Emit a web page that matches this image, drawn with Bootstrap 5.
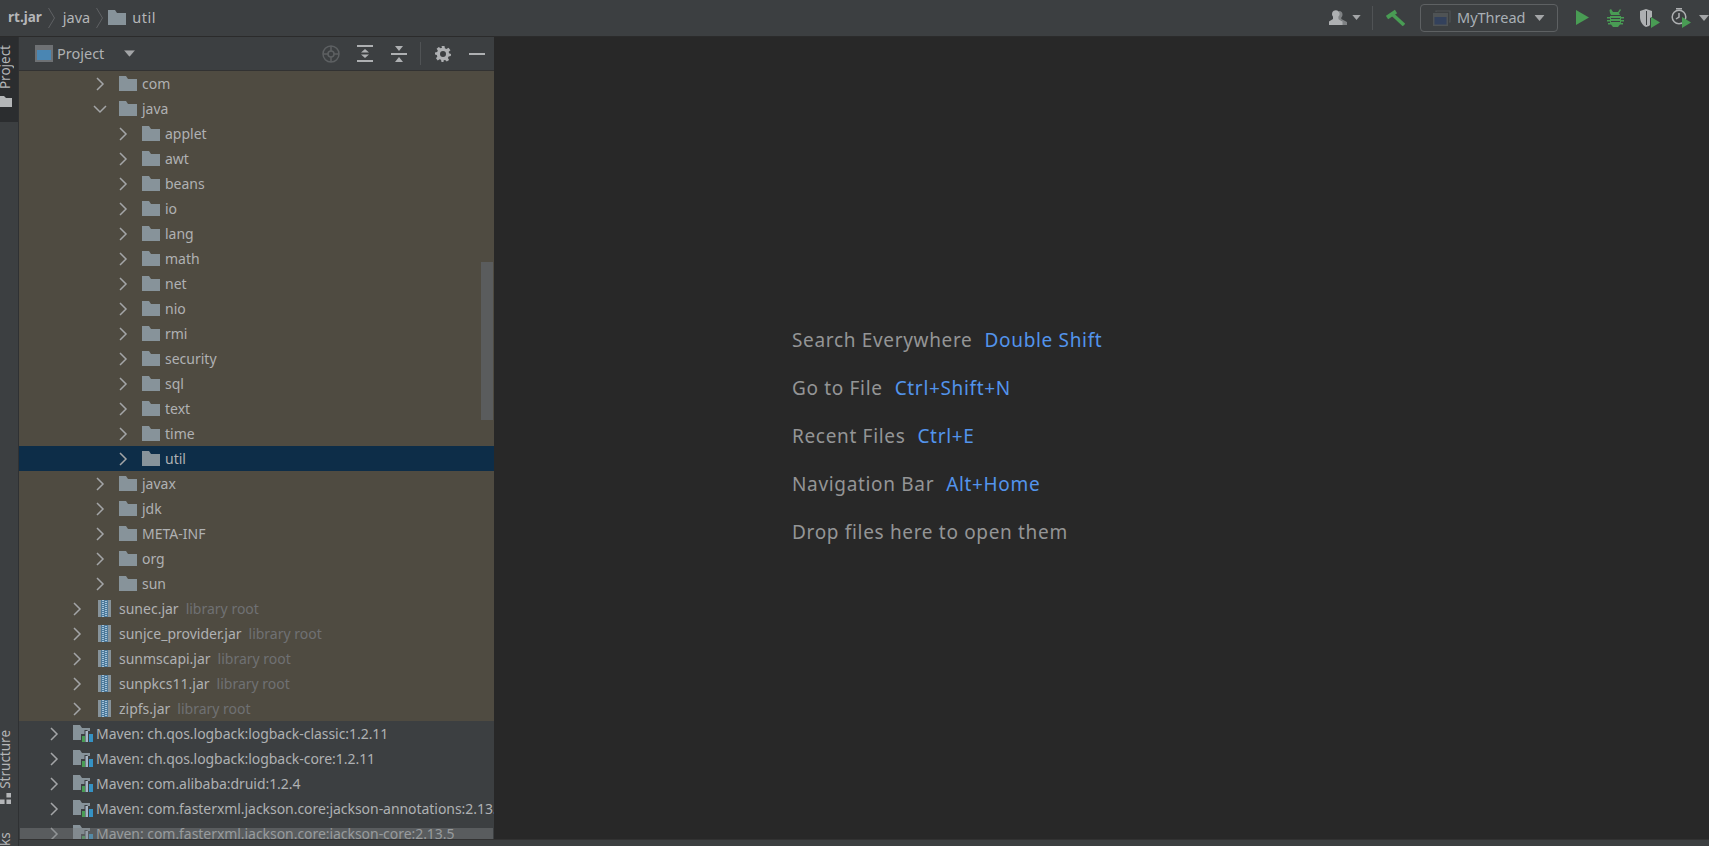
<!DOCTYPE html>
<html lang="en">
<head>
  <meta charset="UTF-8">
  <meta name="viewport" content="width=device-width, initial-scale=1.0">
  <title>rt.jar - util</title>
  <link href="https://cdn.jsdelivr.net/npm/bootstrap@5.3.0/dist/css/bootstrap.min.css" rel="stylesheet">
  <style>
    html, body { height: 100%; }
    body { background: #282828; color: #afb1b3; font-family: "Noto Sans", "Open Sans", sans-serif; font-size: 14px; overflow: hidden; }
    svg { display: block; flex: none; }
    .ide-top { height: 37px; background: #3c3f41; border-bottom: 1px solid #2b2b2b; flex: none; padding: 0 0 1px 8px; font-size: 14.5px; }
    .crumb { color: #b4b6b8; }
    .crumb-main { font-size: 13.5px; }
    .crumb-sep { margin: 0 8px 0 6px; }
    .crumb-last { margin-left: 6px; letter-spacing: .5px; }
    .run-config { width: 138px; height: 28px; border: 1px solid #5e6163; border-radius: 4px; padding-left: 12px; margin: 0 18px 0 15px; color: #a9b0b6; }
    .run-name { margin-left: 6px; }
    .top-sep { width: 1px; height: 24px; background: #505355; margin: 0 13px 0 11px; }
    .ide-body { min-height: 0; }
    .tool-strip { width: 19px; background: #3c3f41; border-right: 1px solid #2f3133; flex: none; font-size: 13.5px; color: #b4b6b8; overflow: hidden; }
    .strip-tab { writing-mode: vertical-rl; transform: rotate(180deg); line-height: 11px; white-space: nowrap; }
    .strip-active { background: #2b2d2f; height: 85px; padding-top: 8px; }
    .strip-end { height: 11px; }
    .strip-icon { margin-top: 7px; }
    .project-panel { width: 475px; flex: none; background: #3c3f41; position: relative; overflow: hidden; }
    .panel-head { height: 34px; border-bottom: 1px solid #323232; flex: none; padding-left: 16px; font-size: 14.5px; }
    .panel-sep { width: 1px; height: 23px; background: #505355; }
    .tree-row { height: 25px; white-space: nowrap; flex: none; }
    .tree-row.tinted { background: #4f4b41; }
    .tree-row.active { background: #0d2d48; }
    .lv0 { padding-left: 27px; letter-spacing: -.05px; }
    .lv1 { padding-left: 50px; }
    .lv2 { padding-left: 73px; }
    .lv3 { padding-left: 96px; }
    .arrow { width: 16px; margin-right: 11px; }
    .lv1 .arrow { margin-right: 13px; }
    .name { margin-left: 5px; }
    .lv1 .name { margin-left: 8px; }
    .lv0 .name { margin-left: 3px; }
    .hint { color: #6f7173; margin-left: 7px; }
    .v-thumb { position: absolute; right: 1px; top: 225px; width: 12px; height: 158px; background: #5a5c5d; }
    .h-thumb { position: absolute; left: 1px; right: 1px; bottom: 0; height: 11px; background: rgba(125,128,130,.45); }
    .ide-empty { background: #282828; font-size: 19px; letter-spacing: .67px; padding: 0 0 3px 298px; color: #949596; }
    .ide-empty > div { height: 48px; display: flex; align-items: center; }
    .keys { color: #5394ec; margin-left: 12px; }
    .ide-bottom { height: 7px; background: #3c3f41; flex: none; border-top: 1px solid #323232; }
  </style>
</head>
<body class="d-flex flex-column">
  <svg width="0" height="0" class="position-absolute">
    <symbol id="folder" viewBox="0 0 18 15"><path fill="#87939a" d="M0 0h7l2 3h9v12H0z"/></symbol>
    <symbol id="chev-r" viewBox="0 0 16 16"><path fill="none" stroke="#a3a5a7" stroke-width="1.5" d="M5 2l6 6-6 6"/></symbol>
    <symbol id="chev-d" viewBox="0 0 16 16"><path fill="none" stroke="#a3a5a7" stroke-width="1.5" d="M2 5l6 6 6-6"/></symbol>
    <symbol id="jar" viewBox="0 0 13 17"><path fill="#87939a" d="M0 0h13v17H0z"/><path fill="#4d7a9b" d="M3 0h7v17H3z"/><path fill="none" stroke="#a6c4da" stroke-width="2" stroke-dasharray="1 1" d="M5 0v17"/><path fill="none" stroke="#a6c4da" stroke-width="2" stroke-dasharray="1 1" stroke-dashoffset="1" d="M8 0v17"/></symbol>
    <symbol id="maven" viewBox="0 0 20 17"><path fill="#87939a" d="M0 0h7l2 3h8v3h-3v9H0z"/><path fill="#3c3f41" d="M8 9h11v8H8zM11.500 5h3v4h-3z"/><path fill="#499c54" d="M9 11h3v6H9z"/><path fill="#a9b7c6" d="M12.500 6h2.500v11h-2.500z"/><path fill="#3592c4" d="M16 9h4v8h-4z"/></symbol>
    <symbol id="caret" viewBox="0 0 10 6"><path fill="#a3a5a7" d="M0 0h10L5 6z"/></symbol>
  </svg>

  <div class="ide-top d-flex align-items-center">
    <b class="crumb crumb-main">rt.jar</b>
    <svg class="crumb-sep" width="7" height="20" viewBox="0 0 7 20"><path fill="none" stroke="#5f6264" d="M.5 0l6 10-6 10"/></svg>
    <span class="crumb">java</span>
    <svg class="crumb-sep" style="margin-right:5px" width="7" height="20" viewBox="0 0 7 20"><path fill="none" stroke="#5f6264" d="M.5 0l6 10-6 10"/></svg>
    <svg width="18" height="15"><use href="#folder"/></svg>
    <span class="crumb crumb-last">util</span>

    <div class="ms-auto d-flex align-items-center">
      <svg width="18" height="15" viewBox="0 0 18 15"><path fill="#7f8284" d="M10 1a3.500 3.500 0 0 1 3.500 3.500c0 1.300-.5 2.200-1.200 3V9l5.700 3v3h-5v-4L9 9z"/><path fill="#aeb0b2" d="M3 4a3.800 3.800 0 1 1 6.500 2.700V9l4 2.500V15H0v-3.500L4 9V6.700A3.800 3.800 0 0 1 3 4z"/></svg>
      <svg style="margin-left:5px" width="9" height="5"><use href="#caret"/></svg>
      <div class="top-sep"></div>
      <svg width="19" height="17" viewBox="0 0 19 17"><path fill="none" stroke="#499c54" stroke-width="4" d="M1 8.500L10 2.500"/><path fill="none" stroke="#499c54" stroke-width="3.500" d="M6 5l12 11"/></svg>
      <div class="run-config d-flex align-items-center">
        <svg width="18" height="16" viewBox="0 0 18 16"><path fill="none" stroke="#4f5355" stroke-width="1.2" d="M3 2V1h14v11h-1"/><path fill="#4f5355" d="M0 3h15v13H0z"/><path fill="#33415c" d="M1.500 7h12v7.500h-12z"/></svg>
        <span class="run-name">MyThread</span>
        <svg class="ms-auto" style="margin-right:12px" width="11" height="6" viewBox="0 0 10 6"><use href="#caret"/></svg>
      </div>
      <svg width="13" height="15" viewBox="0 0 13 15"><path fill="#499c54" d="M0 0l13 7.500L0 15z"/></svg>
      <svg style="margin:0 16px 0 18px" width="17" height="18" viewBox="0 0 17 18"><path fill="#499c54" d="M4 0l2 3h5l2-3 1 1-2 3 1 2H4L3 4 2.500 1zM3 7h11v1h3v1.500h-3V11h3v1.500h-3V14h2v1.500h-3L11 18H6l-2-2.500H1V14h2v-1.500H0V11h3V9.500H0V8h3z"/><path fill="#3c3f41" d="M4 9h9v1H4zm0 3h9v1H4z"/></svg>
      <svg width="20" height="20" viewBox="0 0 20 20"><path fill="#aeb0b2" d="M0 3l6-2 6 2v6l-2 1v7l-1 1-3 1C2 17 0 13 0 9z"/><path fill="#3c3f41" d="M6 3h1v14H6z"/><path fill="#499c54" d="M11 9l9 5.500-9 5.500z"/></svg>
      <svg style="margin-left:11px" width="20" height="20" viewBox="0 0 20 20"><circle cx="8" cy="9" r="6.800" fill="none" stroke="#aeb0b2" stroke-width="1.500"/><path fill="#aeb0b2" d="M5 0h6v1.500H5z"/><path fill="none" stroke="#aeb0b2" stroke-width="1.500" d="M8 5v4l-3 2"/><path fill="#499c54" d="M11 9l9 5.500-9 5.500z"/></svg>
      <svg class="ms-2" width="10" height="6"><use href="#caret"/></svg>
    </div>
  </div>

  <div class="ide-body d-flex flex-grow-1">
    <div class="tool-strip d-flex flex-column">
      <div class="strip-active d-flex flex-column align-items-start">
        <div class="strip-tab">Project</div>
        <svg class="strip-icon" width="12" height="11" viewBox="0 0 12 11"><path fill="#b4b6b8" d="M0 0h4l2 2h6v9H0z"/></svg>
      </div>
      <div class="mt-auto d-flex flex-column align-items-start">
        <div class="strip-tab">Structure</div>
        <svg class="mt-1" width="11" height="11" viewBox="0 0 12 12"><path fill="#b4b6b8" d="M7 0h5v5H7zM0 7h5v5H0zM7 7h5v5H7z"/></svg>
      </div>
      <div class="strip-end strip-tab" style="margin-top:31px">ks</div>
    </div>

    <div class="d-flex flex-column flex-grow-1">
      <div class="d-flex flex-grow-1" style="min-height:0">
        <div class="project-panel d-flex flex-column">
          <div class="panel-head d-flex align-items-center">
            <svg width="18" height="17" viewBox="0 0 18 17"><path fill="#6e7174" d="M0 0h18v17H0z"/><path fill="#4a86b3" d="M2 5h14v10H2z"/></svg>
            <span class="ms-1">Project</span>
            <svg style="margin-left:20px" width="11" height="7" viewBox="0 0 10 6"><use href="#caret"/></svg>
            <div class="ms-auto d-flex align-items-center" style="margin-right:9px">
              <svg width="18" height="18" viewBox="0 0 18 18"><g fill="none" stroke="#5d6062" stroke-width="1.500"><circle cx="9" cy="9" r="8"/><circle cx="9" cy="9" r="3"/><path d="M9 1v5M9 12v5M1 9h5M12 9h5"/></g></svg>
              <svg style="margin-left:17px" width="16" height="17" viewBox="0 0 16 17"><path fill="#aeb0b2" d="M0 0h16v2H0zM0 15h16v2H0zM8 4l4 3.500H4zM4 9.500h8L8 13z"/></svg>
              <svg style="margin-left:18px" width="16" height="16" viewBox="0 0 16 16"><path fill="#aeb0b2" d="M0 7h16v2H0zM4 0h8L8 5zM8 11l4 5H4z"/></svg>
              <div class="panel-sep" style="margin:0 14px 0 13px"></div>
              <svg width="16" height="16" viewBox="0 0 16 16"><path fill="#aeb0b2" fill-rule="evenodd" d="M6.500 0h3l.4 2.300 1.500.7L13.500 1.700l2 2.600-1.800 1.500.3 1.400L16 8l-.2 2-2.200.5-.7 1.400 1.200 2-2.300 1.700-1.700-1.500-1.400.2L8.500 16h-2l-.5-2.200-1.400-.6-1.900 1.200L1 12.200l1.300-1.800L1.800 9 0 8.500v-2l2.200-.5.600-1.400L1.600 2.700 3.800 1l1.700 1.300L7 1.800zM8 5a3 3 0 1 0 0 6 3 3 0 0 0 0-6z"/></svg>
              <svg style="margin-left:18px" width="16" height="2"><rect width="16" height="2" fill="#aeb0b2"/></svg>
            </div>
          </div>
          <div id="tree" class="d-flex flex-column"></div>
          <div class="v-thumb"></div>
          <div class="h-thumb"></div>
        </div>

        <div class="ide-empty flex-grow-1 d-flex flex-column justify-content-center">
          <div>Search Everywhere<span class="keys">Double Shift</span></div>
          <div>Go to File<span class="keys">Ctrl+Shift+N</span></div>
          <div>Recent Files<span class="keys">Ctrl+E</span></div>
          <div>Navigation Bar<span class="keys">Alt+Home</span></div>
          <div>Drop files here to open them</div>
        </div>
      </div>
      <div class="ide-bottom"></div>
    </div>
  </div>

  <script>
    // [level, name, kind, open]
    const rows = [
      [2, 'com', 'folder'], [2, 'java', 'folder', true],
      [3, 'applet', 'folder'], [3, 'awt', 'folder'], [3, 'beans', 'folder'], [3, 'io', 'folder'],
      [3, 'lang', 'folder'], [3, 'math', 'folder'], [3, 'net', 'folder'], [3, 'nio', 'folder'],
      [3, 'rmi', 'folder'], [3, 'security', 'folder'], [3, 'sql', 'folder'], [3, 'text', 'folder'],
      [3, 'time', 'folder'], [3, 'util', 'folder'],
      [2, 'javax', 'folder'], [2, 'jdk', 'folder'], [2, 'META-INF', 'folder'], [2, 'org', 'folder'], [2, 'sun', 'folder'],
      [1, 'sunec.jar', 'jar'], [1, 'sunjce_provider.jar', 'jar'], [1, 'sunmscapi.jar', 'jar'],
      [1, 'sunpkcs11.jar', 'jar'], [1, 'zipfs.jar', 'jar'],
      [0, 'Maven: ch.qos.logback:logback-classic:1.2.11', 'maven'],
      [0, 'Maven: ch.qos.logback:logback-core:1.2.11', 'maven'],
      [0, 'Maven: com.alibaba:druid:1.2.4', 'maven'],
      [0, 'Maven: com.fasterxml.jackson.core:jackson-annotations:2.13.5', 'maven'],
      [0, 'Maven: com.fasterxml.jackson.core:jackson-core:2.13.5', 'maven'],
    ];
    const size = { folder: [18, 15], jar: [13, 17], maven: [20, 17] };
    document.getElementById('tree').innerHTML = rows.map(([lv, name, kind, open]) => {
      const cls = lv === 0 ? '' : name === 'util' ? ' active' : ' tinted';
      const [w, h] = size[kind];
      const hint = kind === 'jar' ? '<span class="hint">library root</span>' : '';
      return `<div class="tree-row d-flex align-items-center lv${lv}${cls}">
        <svg class="arrow" width="16" height="16"><use href="#${open ? 'chev-d' : 'chev-r'}"/></svg>
        <svg width="${w}" height="${h}"><use href="#${kind}"/></svg>
        <span class="name">${name}</span>${hint}</div>`;
    }).join('');
  </script>
</body>
</html>
